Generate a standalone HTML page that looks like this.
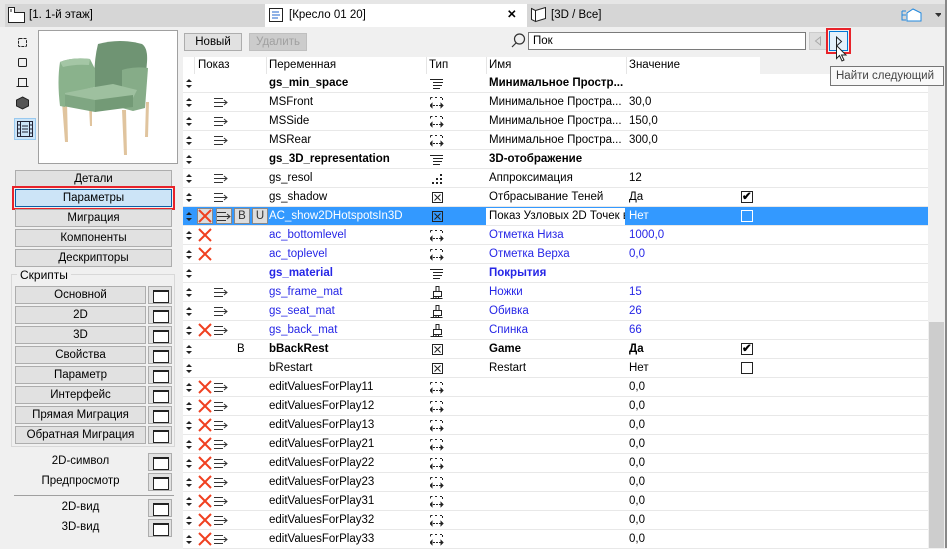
<!DOCTYPE html>
<html><head><meta charset="utf-8">
<style>
*{box-sizing:border-box;margin:0;padding:0}
body{width:947px;height:548px;overflow:hidden;background:#f0f0f0;font-family:"Liberation Sans",sans-serif;font-size:11.5px;color:#000;position:relative}
.a{position:absolute}
.tabbar{left:0;top:0;width:947px;height:27px;background:#e6e6e6}
.tab{top:4px;height:23px;line-height:23px;padding-left:24px;font-size:11.5px}
.btn{position:absolute;background:#e1e1e1;border:1px solid #adadad;text-align:center;height:18px;line-height:16px;font-size:11.5px}
.ib{position:absolute;width:24px;height:18px;background:#e1e1e1;border:1px solid #adadad}
.ib:after{content:"";position:absolute;left:4px;top:3px;width:14px;height:10px;border:1px solid #222;border-top-width:2px;background:#fff}
.row{position:absolute;left:183px;width:745px;height:19px;border-bottom:1px solid #e8e8e8;background:#fff}
.row span{position:absolute;top:3px;white-space:nowrap}
.row svg{position:absolute}
.b{font-weight:bold}
.bl{color:#2626e6}
.cb{position:absolute;left:558px;top:3px;width:12px;height:12px;border:1px solid #222;background:#fff}
</style></head><body>
<svg width="0" height="0" style="position:absolute">
<defs>
<g id="srt"><path d="M3 0L6 3H0Z M3 9L0 6H6Z" fill="#222"/></g>
<g id="arr" fill="none" stroke="#333" stroke-width="1"><path d="M0 .5H9M0 4.5H13M10 2l3 2.5-3 2.5M0 8.5H9"/></g>
<g id="x"><path d="M1 1L13 13M13 1L1 13" stroke="#f04020" stroke-width="2"/></g>
<g id="lst" stroke="#222"><path d="M0 .5H13M3 3.5H13M3 6.5H12M3 9.5H10"/></g>
<g id="dim" fill="none" stroke="#222"><path d="M.5 .5H3M5 .5H8M10 .5H12.5V3M.5 .5V3M0 8.5H13" stroke-dasharray="2 1"/><path d="M0 8.5l2-2v4zM13 8.5l-2-2v4z" fill="#222"/></g>
<g id="dot" fill="#222"><rect x="8" y="0" width="2" height="2"/><rect x="4" y="4" width="2" height="2"/><rect x="8" y="4" width="2" height="2"/><rect x="0" y="8" width="2" height="2"/><rect x="4" y="8" width="2" height="2"/><rect x="8" y="8" width="2" height="2"/></g>
<g id="chk" fill="none" stroke="#222"><rect x=".5" y=".5" width="10" height="10"/><path d="M2.5 2.5L8.5 8.5M8.5 2.5L2.5 8.5"/></g>
<g id="br" fill="none" stroke="#222"><path d="M6 .5h3v5h-3zM3.5 5.5h8v5h-8zM.5 12.5h12M3.5 10.5v2M6 10.5v2M8.5 10.5v2"/></g>
</defs></svg>

<div class="a tabbar"></div>
<div class="a tab" style="left:5px;width:260px;background:#d6d6d6">[1. 1-й этаж]</div>
<svg class="a" style="left:8px;top:7px" width="18" height="16"><path d="M.5 .5h6v5h10v10H.5z" fill="#fff" stroke="#222"/><path d="M3 2v3" stroke="#222"/></svg>
<div class="a tab" style="left:265px;width:262px;background:#fff">[Кресло 01 20]<span style="position:absolute;left:242px;font-weight:bold">✕</span></div>
<svg class="a" style="left:269px;top:8px" width="15" height="15"><rect x=".5" y=".5" width="13" height="13" fill="#fff" stroke="#222"/><path d="M3 4h7M3 7h8M3 10h6" stroke="#2266cc"/></svg>
<div class="a tab" style="left:527px;width:258px;background:#d6d6d6">[3D / Все]</div>
<svg class="a" style="left:531px;top:7px" width="16" height="16"><path d="M.5 1.5l4 2v11l-4-2zM4.5 3.5L14.5.5v11l-10 3" fill="#fff" stroke="#222"/></svg>
<div class="a" style="left:785px;top:4px;width:162px;height:23px;background:#d6d6d6"></div>
<svg class="a" style="left:901px;top:7px" width="40" height="16"><path d="M1 4v9h4M1 8h4M1 4h4" stroke="#2288dd" fill="none"/><path d="M6 14V6l6-4 8 4v8zM12 2l8 4" fill="#fff" stroke="#2288dd"/><path d="M34 6h7l-3.5 4z" fill="#333"/></svg>

<!-- left icons -->
<svg class="a" style="left:16px;top:36px" width="14" height="110" fill="none" stroke="#222">
<rect x="2.5" y="2.5" width="8" height="8" rx="1" stroke-dasharray="3 1"/>
<rect x="2.5" y="22.5" width="8" height="8" rx="1"/>
<path d="M2.5 50.5v-8h8v8M.5 50.5h12" />
<path d="M6.5 61l6 3v6l-6 3-6-3v-6z" fill="#555"/>
</svg>
<div class="a" style="left:14px;top:118px;width:22px;height:22px;background:#cce4f7;border:1px solid #99c9ef"></div>
<svg class="a" style="left:17px;top:121px" width="16" height="16" fill="none" stroke="#223"><rect x=".5" y=".5" width="15" height="15"/><path d="M3.5 .5v15M12.5 .5v15M5 5h6M5 8h6M5 11h6M.5 4h3M.5 8h3M.5 12h3M12.5 4h3M12.5 8h3M12.5 12h3"/></svg>
<div class="a" style="left:38px;top:30px;width:140px;height:134px;background:#fff;border:1px solid #a0a0a0"></div>
<svg class="a" style="left:38px;top:30px" width="140" height="134">
<path d="M24 72l3 40h3l-1-40zM84 80l2 45h3l-1-45zM108 72l-1 35h3l1-35zM51 76l1 20h2v-20z" fill="#e0c49e"/>
<path d="M60 14q22-6 44 0 6 4 5 18l-3 36H58q-4-30 2-54z" fill="#6f9473"/>
<path d="M84 40q12-4 26-2l-3 40-12 3-11-3z" fill="#86ac88"/>
<path d="M27 62l48-8 24 6-4 8-38 6-30-6z" fill="#9ec09f"/>
<path d="M25 64l32 6v12l-32-6z" fill="#7fa682"/>
<path d="M57 70l38-5v12l-38 5z" fill="#739a76"/>
<path d="M22 32q12-5 30-3l5 10v18l-30 6v14l-5-1q-3-25 0-44z" fill="#8ab28c"/>
<path d="M22 32q12-5 30-3l-1 6q-14-1-26 2z" fill="#a4c6a5"/>
</svg>

<div class="btn" style="left:15px;top:170px;width:157px">Детали</div>
<div class="a" style="left:12px;top:186px;width:163px;height:24px;border:2px solid #e8232a"></div>
<div class="btn" style="left:15px;top:189px;width:157px;background:#cce4f7;border-color:#0b5fa5">Параметры</div>
<div class="btn" style="left:15px;top:209px;width:157px">Миграция</div>
<div class="btn" style="left:15px;top:229px;width:157px">Компоненты</div>
<div class="btn" style="left:15px;top:249px;width:157px">Дескрипторы</div>
<div class="a" style="left:11px;top:274px;width:164px;height:173px;border:1px solid #d8d8d8"></div>
<div class="a" style="left:17px;top:268px;background:#f0f0f0;padding:0 3px;font-size:12px">Скрипты</div>
<div class="btn" style="left:15px;top:286px;width:131px">Основной</div><div class="ib" style="left:148px;top:286px"></div>
<div class="btn" style="left:15px;top:306px;width:131px">2D</div><div class="ib" style="left:148px;top:306px"></div>
<div class="btn" style="left:15px;top:326px;width:131px">3D</div><div class="ib" style="left:148px;top:326px"></div>
<div class="btn" style="left:15px;top:346px;width:131px">Свойства</div><div class="ib" style="left:148px;top:346px"></div>
<div class="btn" style="left:15px;top:366px;width:131px">Параметр</div><div class="ib" style="left:148px;top:366px"></div>
<div class="btn" style="left:15px;top:386px;width:131px">Интерфейс</div><div class="ib" style="left:148px;top:386px"></div>
<div class="btn" style="left:15px;top:406px;width:131px">Прямая Миграция</div><div class="ib" style="left:148px;top:406px"></div>
<div class="btn" style="left:15px;top:426px;width:131px">Обратная Миграция</div><div class="ib" style="left:148px;top:426px"></div>
<div class="a" style="left:15px;top:455px;width:131px;text-align:center">2D-символ</div><div class="ib" style="left:148px;top:453px"></div>
<div class="a" style="left:15px;top:475px;width:131px;text-align:center">Предпросмотр</div><div class="ib" style="left:148px;top:473px"></div>
<div class="a" style="left:14px;top:495px;width:160px;height:1px;background:#a0a0a0"></div>
<div class="a" style="left:15px;top:501px;width:131px;text-align:center">2D-вид</div><div class="ib" style="left:148px;top:499px"></div>
<div class="a" style="left:15px;top:521px;width:131px;text-align:center">3D-вид</div><div class="ib" style="left:148px;top:519px"></div>

<!-- toolbar -->
<div class="btn" style="left:184px;top:33px;width:58px">Новый</div>
<div class="btn" style="left:249px;top:33px;width:58px;color:#a0a0a0;background:#ccc;border-color:#bfbfbf">Удалить</div>
<svg class="a" style="left:511px;top:33px" width="15" height="15" fill="none" stroke="#333" stroke-width="1.2"><circle cx="8.5" cy="6" r="5"/><path d="M5 10L1 14"/></svg>
<div class="a" style="left:528px;top:32px;width:278px;height:18px;background:#fff;border:1px solid #7a7a7a;padding:2px 4px">Пок</div>
<div class="a" style="left:809px;top:32px;width:18px;height:18px;background:#ddd;border:1px solid #ccc"></div>
<svg class="a" style="left:814px;top:36px" width="8" height="10"><path d="M6.5 1L1.5 5 6.5 9z" fill="none" stroke="#aaa"/></svg>
<div class="a" style="left:826px;top:28px;width:25px;height:26px;border:2px solid #e8232a"></div>
<div class="a" style="left:829px;top:31px;width:19px;height:20px;background:#e5f1fb;border:1px solid #0078d7"></div>
<svg class="a" style="left:835px;top:36px" width="8" height="11"><path d="M1.5 1l5 4.5-5 4.5z" fill="none" stroke="#222"/></svg>

<!-- table -->
<div class="a" style="left:183px;top:57px;width:577px;height:17px;background:#fff"></div>
<div class="a" style="left:194px;top:57px;width:1px;height:17px;background:#e5e5e5"></div>
<div class="a" style="left:266px;top:57px;width:1px;height:17px;background:#e5e5e5"></div>
<div class="a" style="left:426px;top:57px;width:1px;height:17px;background:#e5e5e5"></div>
<div class="a" style="left:486px;top:57px;width:1px;height:17px;background:#e5e5e5"></div>
<div class="a" style="left:626px;top:57px;width:1px;height:17px;background:#e5e5e5"></div>
<div class="a" style="left:198px;top:59px">Показ</div>
<div class="a" style="left:269px;top:59px">Переменная</div>
<div class="a" style="left:429px;top:59px">Тип</div>
<div class="a" style="left:489px;top:59px">Имя</div>
<div class="a" style="left:629px;top:59px">Значение</div>

<div class="row" style="top:74px"><svg style="left:3px;top:5px" width="6" height="9"><use href="#srt"/></svg><span class="b" style="left:86px">gs_min_space</span><svg style="left:247px;top:5px" width="14" height="11"><use href="#lst"/></svg><span class="b" style="left:306px">Минимальное Простр...</span></div>
<div class="row" style="top:93px"><svg style="left:3px;top:5px" width="6" height="9"><use href="#srt"/></svg><svg style="left:31px;top:5px" width="14" height="10"><use href="#arr"/></svg><span style="left:86px">MSFront</span><svg style="left:247px;top:4px" width="14" height="12"><use href="#dim"/></svg><span style="left:306px">Минимальное Простра...</span><span style="left:446px">30,0</span></div>
<div class="row" style="top:112px"><svg style="left:3px;top:5px" width="6" height="9"><use href="#srt"/></svg><svg style="left:31px;top:5px" width="14" height="10"><use href="#arr"/></svg><span style="left:86px">MSSide</span><svg style="left:247px;top:4px" width="14" height="12"><use href="#dim"/></svg><span style="left:306px">Минимальное Простра...</span><span style="left:446px">150,0</span></div>
<div class="row" style="top:131px"><svg style="left:3px;top:5px" width="6" height="9"><use href="#srt"/></svg><svg style="left:31px;top:5px" width="14" height="10"><use href="#arr"/></svg><span style="left:86px">MSRear</span><svg style="left:247px;top:4px" width="14" height="12"><use href="#dim"/></svg><span style="left:306px">Минимальное Простра...</span><span style="left:446px">300,0</span></div>
<div class="row" style="top:150px"><svg style="left:3px;top:5px" width="6" height="9"><use href="#srt"/></svg><span class="b" style="left:86px">gs_3D_representation</span><svg style="left:247px;top:5px" width="14" height="11"><use href="#lst"/></svg><span class="b" style="left:306px">3D-отображение</span></div>
<div class="row" style="top:169px"><svg style="left:3px;top:5px" width="6" height="9"><use href="#srt"/></svg><svg style="left:31px;top:5px" width="14" height="10"><use href="#arr"/></svg><span style="left:86px">gs_resol</span><svg style="left:249px;top:5px" width="11" height="11"><use href="#dot"/></svg><span style="left:306px">Аппроксимация</span><span style="left:446px">12</span></div>
<div class="row" style="top:188px"><svg style="left:3px;top:5px" width="6" height="9"><use href="#srt"/></svg><svg style="left:31px;top:5px" width="14" height="10"><use href="#arr"/></svg><span style="left:86px">gs_shadow</span><svg style="left:249px;top:4px" width="11" height="11"><use href="#chk"/></svg><span style="left:306px">Отбрасывание Теней</span><span style="left:446px">Да</span><div class="cb"></div><span style="left:559px;top:1px;font-weight:bold">✔</span></div>
<div class="row" style="top:207px;background:#3399ff;color:#fff"><svg style="left:3px;top:5px" width="6" height="9"><use href="#srt"/></svg>
<div class="a" style="left:14px;top:1px;width:16px;height:16px;background:#ddd;border:1px solid #888"></div><svg style="left:15px;top:2px" width="14" height="14"><use href="#x"/></svg>
<div class="a" style="left:33px;top:1px;width:16px;height:16px;background:#ddd;border:1px solid #888"></div><svg style="left:34px;top:5px" width="14" height="10"><use href="#arr"/></svg>
<div class="a" style="left:51px;top:1px;width:16px;height:16px;background:#ddd;border:1px solid #888;color:#333;text-align:center;line-height:14px">B</div>
<div class="a" style="left:69px;top:1px;width:16px;height:16px;background:#ddd;border:1px solid #888;color:#333;text-align:center;line-height:14px">U</div>
<span style="left:86px">AC_show2DHotspotsIn3D</span><svg style="left:249px;top:4px" width="11" height="11"><use href="#chk"/></svg>
<div class="a" style="left:303px;top:1px;width:139px;height:17px;background:#fff;color:#000;padding:2px 3px;overflow:hidden;white-space:nowrap">Показ Узловых 2D Точек в</div><span style="left:446px">Нет</span><div class="cb" style="border-color:#fff;background:transparent"></div></div>
<div class="row bl" style="top:226px"><svg style="left:3px;top:5px" width="6" height="9"><use href="#srt"/></svg><svg style="left:15px;top:2px" width="14" height="14"><use href="#x"/></svg><span style="left:86px">ac_bottomlevel</span><svg style="left:247px;top:4px" width="14" height="12"><use href="#dim"/></svg><span style="left:306px">Отметка Низа</span><span style="left:446px">1000,0</span></div>
<div class="row bl" style="top:245px"><svg style="left:3px;top:5px" width="6" height="9"><use href="#srt"/></svg><svg style="left:15px;top:2px" width="14" height="14"><use href="#x"/></svg><span style="left:86px">ac_toplevel</span><svg style="left:247px;top:4px" width="14" height="12"><use href="#dim"/></svg><span style="left:306px">Отметка Верха</span><span style="left:446px">0,0</span></div>
<div class="row bl" style="top:264px"><svg style="left:3px;top:5px" width="6" height="9"><use href="#srt"/></svg><span class="b" style="left:86px">gs_material</span><svg style="left:247px;top:5px" width="14" height="11"><use href="#lst"/></svg><span class="b" style="left:306px">Покрытия</span></div>
<div class="row bl" style="top:283px"><svg style="left:3px;top:5px" width="6" height="9"><use href="#srt"/></svg><svg style="left:31px;top:5px" width="14" height="10"><use href="#arr"/></svg><span style="left:86px">gs_frame_mat</span><svg style="left:247px;top:3px" width="14" height="14"><use href="#br"/></svg><span style="left:306px">Ножки</span><span style="left:446px">15</span></div>
<div class="row bl" style="top:302px"><svg style="left:3px;top:5px" width="6" height="9"><use href="#srt"/></svg><svg style="left:31px;top:5px" width="14" height="10"><use href="#arr"/></svg><span style="left:86px">gs_seat_mat</span><svg style="left:247px;top:3px" width="14" height="14"><use href="#br"/></svg><span style="left:306px">Обивка</span><span style="left:446px">26</span></div>
<div class="row bl" style="top:321px"><svg style="left:3px;top:5px" width="6" height="9"><use href="#srt"/></svg><svg style="left:15px;top:2px" width="14" height="14"><use href="#x"/></svg><svg style="left:31px;top:5px" width="14" height="10"><use href="#arr"/></svg><span style="left:86px">gs_back_mat</span><svg style="left:247px;top:3px" width="14" height="14"><use href="#br"/></svg><span style="left:306px">Спинка</span><span style="left:446px">66</span></div>
<div class="row" style="top:340px"><svg style="left:3px;top:5px" width="6" height="9"><use href="#srt"/></svg><span style="left:54px">B</span><span class="b" style="left:86px">bBackRest</span><svg style="left:249px;top:4px" width="11" height="11"><use href="#chk"/></svg><span class="b" style="left:306px">Game</span><span class="b" style="left:446px">Да</span><div class="cb"></div><span style="left:559px;top:1px;font-weight:bold">✔</span></div>
<div class="row" style="top:359px"><svg style="left:3px;top:5px" width="6" height="9"><use href="#srt"/></svg><span style="left:86px">bRestart</span><svg style="left:249px;top:4px" width="11" height="11"><use href="#chk"/></svg><span style="left:306px">Restart</span><span style="left:446px">Нет</span><div class="cb"></div></div>
<div class="row" style="top:378px"><svg style="left:3px;top:5px" width="6" height="9"><use href="#srt"/></svg><svg style="left:15px;top:2px" width="14" height="14"><use href="#x"/></svg><svg style="left:31px;top:5px" width="14" height="10"><use href="#arr"/></svg><span style="left:86px">editValuesForPlay11</span><svg style="left:247px;top:4px" width="14" height="12"><use href="#dim"/></svg><span style="left:446px">0,0</span></div>
<div class="row" style="top:397px"><svg style="left:3px;top:5px" width="6" height="9"><use href="#srt"/></svg><svg style="left:15px;top:2px" width="14" height="14"><use href="#x"/></svg><svg style="left:31px;top:5px" width="14" height="10"><use href="#arr"/></svg><span style="left:86px">editValuesForPlay12</span><svg style="left:247px;top:4px" width="14" height="12"><use href="#dim"/></svg><span style="left:446px">0,0</span></div>
<div class="row" style="top:416px"><svg style="left:3px;top:5px" width="6" height="9"><use href="#srt"/></svg><svg style="left:15px;top:2px" width="14" height="14"><use href="#x"/></svg><svg style="left:31px;top:5px" width="14" height="10"><use href="#arr"/></svg><span style="left:86px">editValuesForPlay13</span><svg style="left:247px;top:4px" width="14" height="12"><use href="#dim"/></svg><span style="left:446px">0,0</span></div>
<div class="row" style="top:435px"><svg style="left:3px;top:5px" width="6" height="9"><use href="#srt"/></svg><svg style="left:15px;top:2px" width="14" height="14"><use href="#x"/></svg><svg style="left:31px;top:5px" width="14" height="10"><use href="#arr"/></svg><span style="left:86px">editValuesForPlay21</span><svg style="left:247px;top:4px" width="14" height="12"><use href="#dim"/></svg><span style="left:446px">0,0</span></div>
<div class="row" style="top:454px"><svg style="left:3px;top:5px" width="6" height="9"><use href="#srt"/></svg><svg style="left:15px;top:2px" width="14" height="14"><use href="#x"/></svg><svg style="left:31px;top:5px" width="14" height="10"><use href="#arr"/></svg><span style="left:86px">editValuesForPlay22</span><svg style="left:247px;top:4px" width="14" height="12"><use href="#dim"/></svg><span style="left:446px">0,0</span></div>
<div class="row" style="top:473px"><svg style="left:3px;top:5px" width="6" height="9"><use href="#srt"/></svg><svg style="left:15px;top:2px" width="14" height="14"><use href="#x"/></svg><svg style="left:31px;top:5px" width="14" height="10"><use href="#arr"/></svg><span style="left:86px">editValuesForPlay23</span><svg style="left:247px;top:4px" width="14" height="12"><use href="#dim"/></svg><span style="left:446px">0,0</span></div>
<div class="row" style="top:492px"><svg style="left:3px;top:5px" width="6" height="9"><use href="#srt"/></svg><svg style="left:15px;top:2px" width="14" height="14"><use href="#x"/></svg><svg style="left:31px;top:5px" width="14" height="10"><use href="#arr"/></svg><span style="left:86px">editValuesForPlay31</span><svg style="left:247px;top:4px" width="14" height="12"><use href="#dim"/></svg><span style="left:446px">0,0</span></div>
<div class="row" style="top:511px"><svg style="left:3px;top:5px" width="6" height="9"><use href="#srt"/></svg><svg style="left:15px;top:2px" width="14" height="14"><use href="#x"/></svg><svg style="left:31px;top:5px" width="14" height="10"><use href="#arr"/></svg><span style="left:86px">editValuesForPlay32</span><svg style="left:247px;top:4px" width="14" height="12"><use href="#dim"/></svg><span style="left:446px">0,0</span></div>
<div class="row" style="top:530px"><svg style="left:3px;top:5px" width="6" height="9"><use href="#srt"/></svg><svg style="left:15px;top:2px" width="14" height="14"><use href="#x"/></svg><svg style="left:31px;top:5px" width="14" height="10"><use href="#arr"/></svg><span style="left:86px">editValuesForPlay33</span><svg style="left:247px;top:4px" width="14" height="12"><use href="#dim"/></svg><span style="left:446px">0,0</span></div>

<!-- scrollbar -->
<div class="a" style="left:928px;top:74px;width:17px;height:474px;background:#f0f0f0"></div>
<div class="a" style="left:929px;top:322px;width:15px;height:226px;background:#cdcdcd"></div>
<div class="a" style="left:945px;top:0;width:2px;height:548px;background:#888"></div>

<!-- tooltip + cursor on top -->
<div class="a" style="left:830px;top:66px;width:114px;height:20px;background:#f8f8f8;border:1px solid #767676;padding:3px 0 0 5px;color:#444;white-space:nowrap;font-size:11.5px">Найти следующий</div>
<svg class="a" style="left:836px;top:45px" width="12" height="18"><path d="M.5.5v13l3-3 2.5 5.5 2-1-2.5-5H10z" fill="#fff" stroke="#222"/></svg>
</body></html>
